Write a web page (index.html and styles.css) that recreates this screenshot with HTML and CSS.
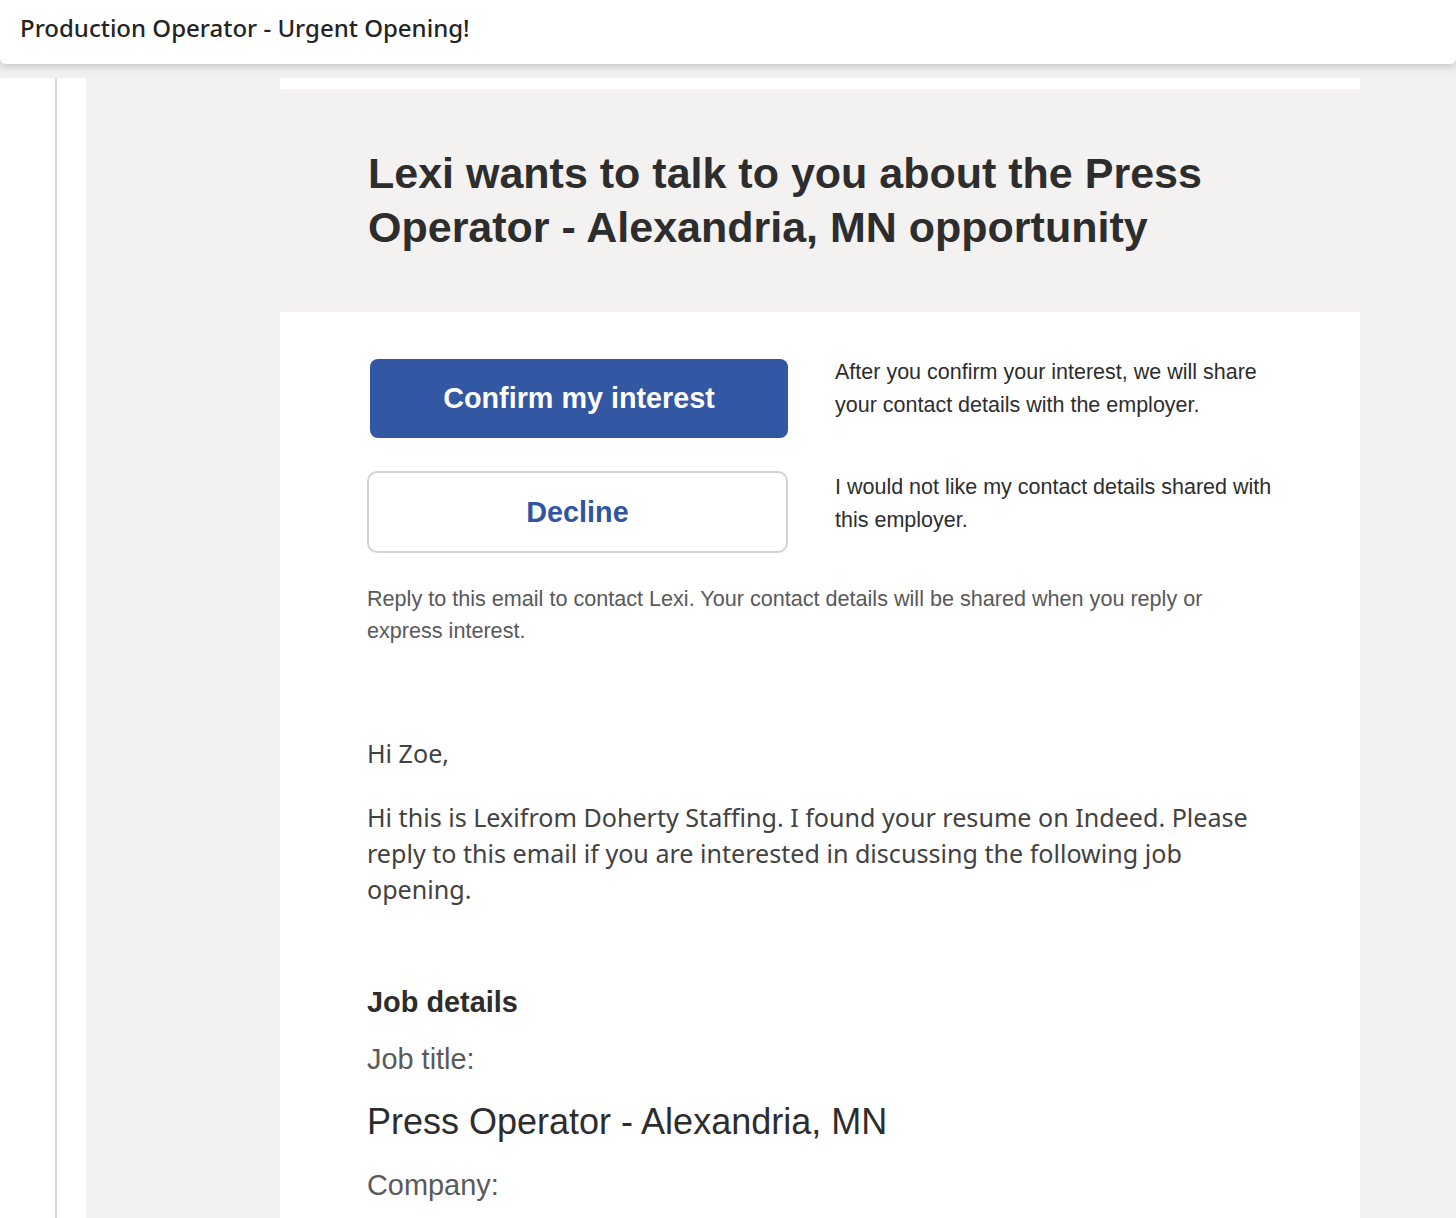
FILE: index.html
```html
<!DOCTYPE html>
<html lang="en">
<head>
    <meta charset="utf-8">
    <meta name="viewport" content="width=device-width, initial-scale=1.0">
    <title>Production Operator - Urgent Opening!</title>
    <link rel="stylesheet" href="styles.css">
</head>
<body>
    <header class="subject-bar">
        <h1>Production Operator - Urgent Opening!</h1>
    </header>

    <div class="reading-pane">
        <div class="nav-edge"></div>
        <div class="pane-gutter"></div>

        <div class="canvas">
            <div class="mail">
                <div class="mail-hero">
                    <h2>Lexi wants to talk to you about the Press Operator - Alexandria, MN opportunity</h2>
                </div>

                <div class="mail-body">
                    <div class="actions">
                        <button class="btn btn-confirm">Confirm my interest</button>
                        <p class="action-note">After you confirm your interest, we will share your contact details with the employer.</p>

                        <button class="btn btn-decline">Decline</button>
                        <p class="action-note">I would not like my contact details shared with this employer.</p>
                    </div>

                    <p class="reply-note">Reply to this email to contact Lexi. Your contact details will be shared when you reply or express interest.</p>

                    <div class="message">
                        <p class="greeting">Hi Zoe,</p>
                        <p>Hi this is Lexifrom Doherty Staffing. I found your resume on Indeed. Please reply to this email if you are interested in discussing the following job opening.</p>
                    </div>

                    <div class="job">
                        <h3>Job details</h3>
                        <p class="job-label">Job title:</p>
                        <p class="job-title">Press Operator - Alexandria, MN</p>
                        <p class="job-label">Company:</p>
                    </div>
                </div>
            </div>
        </div>
    </div>
</body>
</html>
```

FILE: styles.css
```css
html, body {
    height: 100%;
}
body {
    margin: 0;
    overflow: hidden;
    background-color: #f0f0f0;
    font-family: "Liberation Sans", Arial, sans-serif;
    color: #2d2d2d;
}
p, h1, h2, h3 {
    margin: 0;
}

/* subject line on top */
.subject-bar {
    position: relative;
    z-index: 2;
    height: 64px;
    margin-bottom: 14px;
    padding-left: 20px;
    background-color: white;
    border-radius: 0 0 6px 6px;
    box-shadow: 0 3px 7px rgba(0, 0, 0, 0.16);
}
.subject-bar h1 {
    font-family: "Noto Sans", "Open Sans", sans-serif;
    font-size: 24px;
    font-weight: 500;
    line-height: 56px;
    color: #242424;
}

.reading-pane {
    display: flex;
    height: calc(100% - 78px);
}
.nav-edge {
    width: 55px;
    background-color: white;
    border-right: 2px solid #dadada;
}
.pane-gutter {
    width: 29px;
    background-color: white;
}
.canvas {
    flex: 1;
    padding-left: 194px;
    background-color: #f3f2f1;
}

/* the mail itself */
.mail {
    width: 1080px;
    height: 100%;
    padding-top: 11px;
    box-sizing: border-box;
    background-color: white;
}
.mail-hero {
    padding: 57px 88px 58px;
    background-color: #f3f2f1;
}
.mail-hero h2 {
    font-size: 43px;
    line-height: 54px;
    font-weight: bold;
    color: #2d2d2d;
}
.mail-body {
    padding: 44px 88px 0 87px;
}

.actions {
    display: grid;
    grid-template-columns: 421px 1fr;
    column-gap: 47px;
    row-gap: 33px;
    align-items: start;
}
.btn {
    font-family: "Liberation Sans", Arial, sans-serif;
    font-size: 28.75px;
    font-weight: bold;
    cursor: pointer;
}
.btn-confirm {
    margin: 3px 0 0 3px;
    height: 79px;
    border: none;
    border-radius: 8px;
    background-color: #3257a3;
    color: white;
}
.btn-decline {
    height: 82px;
    border: 2px solid #d4d4d4;
    border-radius: 10px;
    background-color: white;
    color: #2f56a3;
}
.action-note {
    font-size: 21.5px;
    line-height: 33px;
    color: #2d2d2d;
}

.reply-note {
    margin-top: 30px;
    font-size: 21.6px;
    line-height: 32px;
    color: #595959;
}

.message {
    margin-top: 88px;
    font-family: "Noto Sans", "Open Sans", sans-serif;
    font-size: 25.1px;
    line-height: 36px;
    color: #424242;
}
.message .greeting {
    margin-bottom: 28px;
}

.job {
    margin-top: 79px;
}
.job h3 {
    font-size: 28.9px;
    line-height: 32px;
}
.job-label {
    margin-top: 25px;
    font-size: 28.9px;
    line-height: 32px;
    color: #5a5a5a;
}
.job-title {
    margin-top: 25px;
    font-size: 36px;
    line-height: 44px;
    color: #2d2d2d;
}
```
